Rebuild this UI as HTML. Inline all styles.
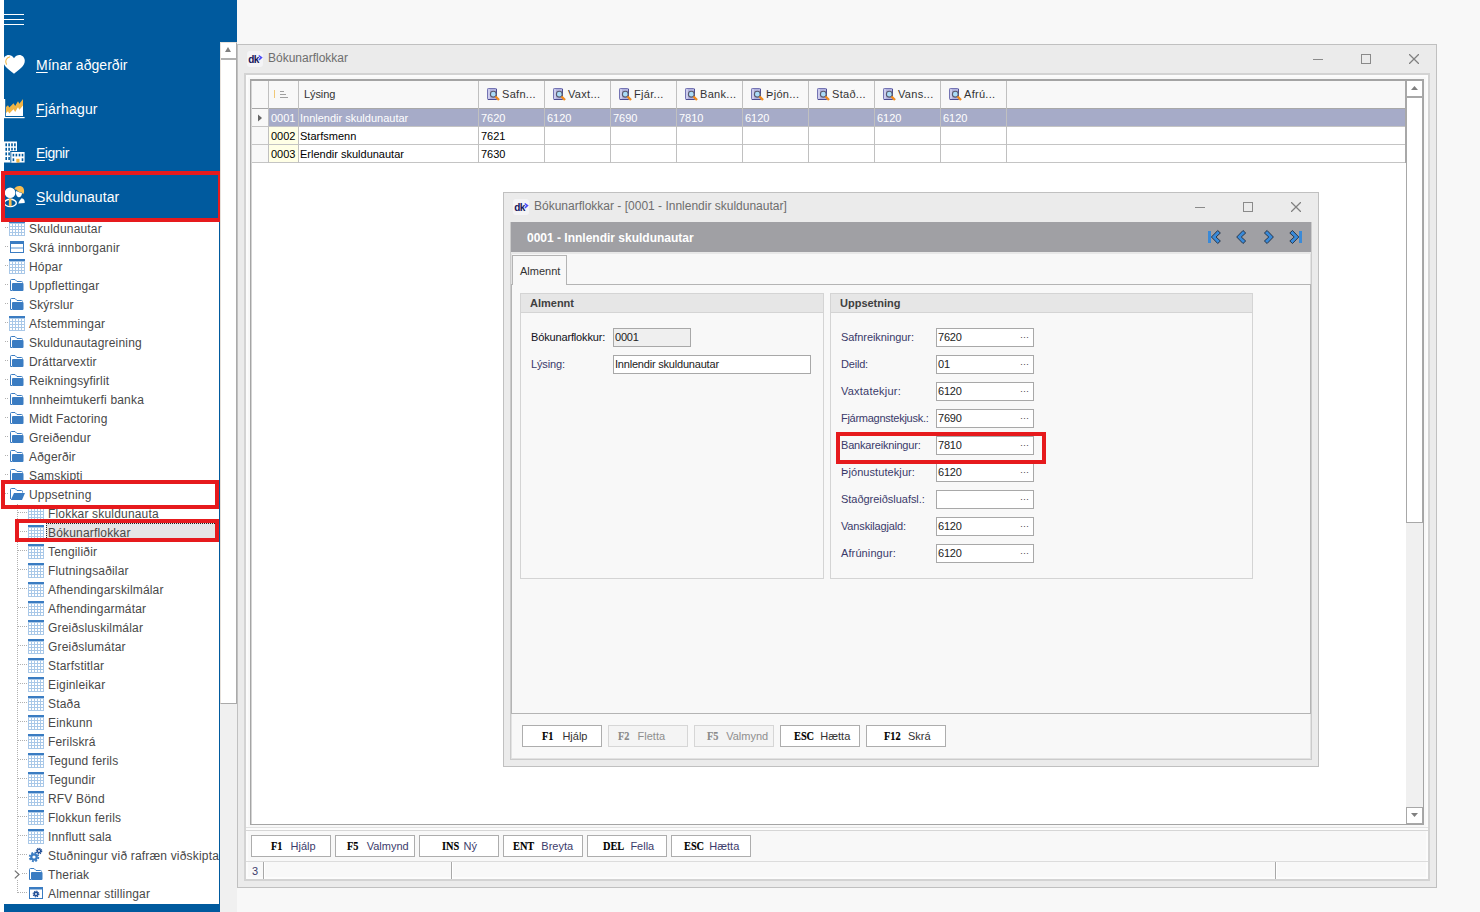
<!DOCTYPE html>
<html lang="is"><head><meta charset="utf-8"><title>Bókunarflokkar</title>
<style>
*{box-sizing:border-box;margin:0;padding:0}
html,body{width:1480px;height:912px;overflow:hidden}
body{position:relative;background:#f8f8f8;font-family:"Liberation Sans",sans-serif;font-size:11px;color:#000}
.a{position:absolute}
.ic{position:absolute;display:block}
.ti{position:absolute;width:16px;height:15px;background:linear-gradient(#3a7cc2,#3a7cc2) 0 0/16px 2px no-repeat,repeating-linear-gradient(90deg,#a9c8e8 0,#a9c8e8 1px,transparent 1px,transparent 3px),repeating-linear-gradient(180deg,#a9c8e8 0,#a9c8e8 1px,transparent 1px,transparent 3px) 0 2px/16px 15px no-repeat,#fff}
.nav{position:absolute;left:36px;color:#fff;font-size:14px;line-height:20px;white-space:nowrap}
.nav u{text-decoration:underline;text-underline-offset:1.5px;text-decoration-thickness:1px}
.tr{position:absolute;font-size:12px;line-height:19px;height:19px;color:#484848;white-space:nowrap;letter-spacing:.18px}
.dot{position:absolute;height:1px;background-image:linear-gradient(90deg,#b0b0b0 1px,transparent 1px);background-size:2px 1px}
.vdot{position:absolute;width:1px;background-image:linear-gradient(180deg,#b0b0b0 1px,transparent 1px);background-size:1px 2px}
.red{position:absolute;border:4px solid #e61a1d}
.t11{position:absolute;font-size:11px;line-height:14px;white-space:nowrap}
.btn{position:absolute;width:80px;height:22px;border:1px solid #adadad;background:#fff;font-size:11px;line-height:20px;white-space:nowrap;color:#3c3c6c}
.btn b,.btn span{position:absolute;top:0}
.btn b{font-family:"Liberation Serif",serif;font-weight:bold;font-size:12px;color:#000;top:-.5px;transform:scaleX(.86);transform-origin:0 50%;-webkit-text-stroke:.15px #000}
.dlg .btn{color:#333}
.btn.dis{background:#f4f4f4;border-color:#d6d6d6;color:#8e8e8e}
.dlg .btn.dis{color:#8e8e8e}
.btn.dis b{color:#8a8a8a;-webkit-text-stroke:.15px #8a8a8a}
.inp{position:absolute;height:19px;border:1px solid #a8a8a8;background:#fff;font-size:11px;line-height:17px;padding-left:1px;white-space:nowrap;color:#222;letter-spacing:-.2px}
.inp i{position:absolute;right:4px;top:0;font-style:normal;color:#444;letter-spacing:0;font-size:9px}
.lbl{position:absolute;font-size:11px;line-height:19px;white-space:nowrap;color:#3a3a6a;letter-spacing:-.15px}
.hc{position:absolute;top:81px;height:27px;font-size:11px;line-height:27px;white-space:nowrap;color:#333;letter-spacing:.3px}
.cell{position:absolute;font-size:11px;line-height:17px;height:17px;white-space:nowrap}
</style></head><body>

<div class="a" style="left:0;top:0;width:236px;height:912px;background:#fff"></div>
<div class="a" style="left:4px;top:0;width:233px;height:42px;background:#005a9e"></div>
<div class="a" style="left:4px;top:42px;width:216px;height:180px;background:#005a9e"></div>
<div class="a" style="left:4px;top:14px;width:20px;height:1px;background:#fff"></div>
<div class="a" style="left:4px;top:19px;width:20px;height:1px;background:#fff"></div>
<div class="a" style="left:4px;top:24px;width:20px;height:1px;background:#fff"></div>
<div class="nav" style="top:55px;letter-spacing:0.03px"><u>M</u>ínar aðgerðir</div>
<div class="nav" style="top:99px;letter-spacing:0.2px"><u>F</u>járhagur</div>
<div class="nav" style="top:143px;letter-spacing:-0.5px"><u>E</u>ignir</div>
<div class="nav" style="top:187px;letter-spacing:0.06px"><u>S</u>kuldunautar</div>
<svg class="ic" style="left:0;top:48px" width="28" height="164" viewBox="0 48 28 164">
<path d="M14 73.8C9 69.5 3.2 66.5 3.2 60.8C3.2 54.6 10.6 52.6 14 58.2C17.4 52.6 24.8 54.6 24.8 60.8C24.8 66.5 19 69.5 14 73.8Z" fill="#fff"/>
<path d="M6.6 64.6C4.6 61.5 6 57.6 10 56.8" fill="none" stroke="#f2b544" stroke-width="1.1"/>
<rect x="4" y="117" width="20.6" height="1.2" fill="#fff"/><rect x="4" y="99" width="1.2" height="18" fill="#fff"/>
<path d="M6 110L23 103V116H6Z" fill="#fff"/>
<path d="M6 107L8 105.2L9.3 107.6L13.5 103.2L15.2 106L18 101.2L19.4 103.8L22.8 99.2L23 99.4V105.4L19.4 109.8L18 107.2L15.2 112L13.5 109.2L9.3 113.6L8 111.2L6 113Z" fill="#f2b544"/>
<rect x="2" y="141.5" width="15" height="21" fill="#fff"/>
<rect x="11.3" y="152" width="13.3" height="10.5" fill="#fff"/>
<rect x="10.4" y="151" width="0.9" height="11.5" fill="#005a9e"/><rect x="10.4" y="151" width="6.8" height="1" fill="#005a9e"/>
<g fill="#005a9e">
<rect x="5.4" y="143.3" width="1.6" height="3"/><rect x="8.3" y="143.3" width="1.6" height="3"/><rect x="11.2" y="143.3" width="1.6" height="3"/><rect x="14.1" y="143.3" width="1.6" height="3"/>
<rect x="5.4" y="147.8" width="1.6" height="3"/><rect x="8.3" y="147.8" width="1.6" height="3"/><rect x="11.2" y="147.8" width="1.6" height="2.6"/><rect x="14.1" y="147.8" width="1.6" height="2.6"/>
<rect x="5.4" y="152.4" width="1.6" height="3"/><rect x="8.3" y="152.4" width="1.6" height="3"/>
<rect x="5.4" y="157" width="1.6" height="3"/><rect x="8.3" y="157" width="1.6" height="3"/>
<rect x="12.6" y="153.8" width="1.6" height="2.6"/><rect x="15.6" y="153.8" width="1.6" height="2.6"/><rect x="18.7" y="153.8" width="1.6" height="2.6"/><rect x="21.7" y="153.8" width="1.6" height="2.6"/>
<rect x="12.6" y="158.3" width="1.6" height="2.8"/><rect x="21.7" y="158.3" width="1.6" height="2.8"/>
</g>
<rect x="16.3" y="158.8" width="3.2" height="3.7" fill="#f2b544"/>
<path d="M14.3 189C15.2 186.8 17.8 185.6 20.2 186C23 186.4 24.6 189 24 192.4L23.2 194.2L21.6 192.4C19.8 192.6 17.6 191.6 16.6 189.8C15.8 189.8 15 189.6 14.3 189Z" fill="#f8bd50"/>
<path d="M16.4 190.6C17.6 192 19.6 192.9 21.4 192.8L22 193.4C21.8 195.6 20.4 197.2 19 197.2C17.4 197.2 16 195.4 15.9 193Z" fill="#fff"/>
<path d="M18.2 203.6L19.6 200.4L21.6 198.2C23.8 198.4 25 200.4 24.7 203Z" fill="#fff"/>
<ellipse cx="10.3" cy="202.9" rx="6" ry="3.7" fill="#005a9e" stroke="#fff" stroke-width="1.4"/>
<circle cx="10.1" cy="192.8" r="5.3" fill="#fff"/>
<path d="M9 198.4H11.4L11.7 205.6L10.2 206.6L8.8 205.6Z" fill="#f8bd50"/>
</svg>
<div class="dot" style="left:5px;top:227px;width:4px"></div>
<div class="ti" style="left:9px;top:221px"></div>
<div class="tr" style="left:29px;top:220px">Skuldunautar</div>
<div class="dot" style="left:5px;top:246px;width:4px"></div>
<svg class="ic" style="left:10px;top:241px" width="14" height="12" viewBox="0 0 14 12"><rect x="0.5" y="0.5" width="13" height="11" fill="#fff" stroke="#3a7cc2"/><rect x="0" y="0" width="14" height="3" fill="#3a7cc2"/><rect x="1" y="6" width="12" height="2" fill="#a9c8e8"/></svg>
<div class="tr" style="left:29px;top:239px">Skrá innborganir</div>
<div class="dot" style="left:5px;top:265px;width:4px"></div>
<div class="ti" style="left:9px;top:259px"></div>
<div class="tr" style="left:29px;top:258px">Hópar</div>
<div class="dot" style="left:5px;top:284px;width:4px"></div>
<svg class="ic" style="left:10px;top:279px" width="14" height="12" viewBox="0 0 14 12"><path d="M0.5 11.5V1.5Q0.5 0.5 1.5 0.5H5L7 2.5H11.5Q12.5 2.5 12.5 3.5" fill="none" stroke="#3a7cc2"/><path d="M0.5 11.5H2" stroke="#3a7cc2"/><rect x="2" y="4" width="11.5" height="8" rx="1" fill="#3a7cc2"/></svg>
<div class="tr" style="left:29px;top:277px">Uppflettingar</div>
<div class="dot" style="left:5px;top:303px;width:4px"></div>
<svg class="ic" style="left:10px;top:298px" width="14" height="12" viewBox="0 0 14 12"><path d="M0.5 11.5V1.5Q0.5 0.5 1.5 0.5H5L7 2.5H11.5Q12.5 2.5 12.5 3.5" fill="none" stroke="#3a7cc2"/><path d="M0.5 11.5H2" stroke="#3a7cc2"/><rect x="2" y="4" width="11.5" height="8" rx="1" fill="#3a7cc2"/></svg>
<div class="tr" style="left:29px;top:296px">Skýrslur</div>
<div class="dot" style="left:5px;top:322px;width:4px"></div>
<div class="ti" style="left:9px;top:316px"></div>
<div class="tr" style="left:29px;top:315px">Afstemmingar</div>
<div class="dot" style="left:5px;top:341px;width:4px"></div>
<svg class="ic" style="left:10px;top:336px" width="14" height="12" viewBox="0 0 14 12"><path d="M0.5 11.5V1.5Q0.5 0.5 1.5 0.5H5L7 2.5H11.5Q12.5 2.5 12.5 3.5" fill="none" stroke="#3a7cc2"/><path d="M0.5 11.5H2" stroke="#3a7cc2"/><rect x="2" y="4" width="11.5" height="8" rx="1" fill="#3a7cc2"/></svg>
<div class="tr" style="left:29px;top:334px">Skuldunautagreining</div>
<div class="dot" style="left:5px;top:360px;width:4px"></div>
<svg class="ic" style="left:10px;top:355px" width="14" height="12" viewBox="0 0 14 12"><path d="M0.5 11.5V1.5Q0.5 0.5 1.5 0.5H5L7 2.5H11.5Q12.5 2.5 12.5 3.5" fill="none" stroke="#3a7cc2"/><path d="M0.5 11.5H2" stroke="#3a7cc2"/><rect x="2" y="4" width="11.5" height="8" rx="1" fill="#3a7cc2"/></svg>
<div class="tr" style="left:29px;top:353px">Dráttarvextir</div>
<div class="dot" style="left:5px;top:379px;width:4px"></div>
<svg class="ic" style="left:10px;top:374px" width="14" height="12" viewBox="0 0 14 12"><path d="M0.5 11.5V1.5Q0.5 0.5 1.5 0.5H5L7 2.5H11.5Q12.5 2.5 12.5 3.5" fill="none" stroke="#3a7cc2"/><path d="M0.5 11.5H2" stroke="#3a7cc2"/><rect x="2" y="4" width="11.5" height="8" rx="1" fill="#3a7cc2"/></svg>
<div class="tr" style="left:29px;top:372px">Reikningsyfirlit</div>
<div class="dot" style="left:5px;top:398px;width:4px"></div>
<svg class="ic" style="left:10px;top:393px" width="14" height="12" viewBox="0 0 14 12"><path d="M0.5 11.5V1.5Q0.5 0.5 1.5 0.5H5L7 2.5H11.5Q12.5 2.5 12.5 3.5" fill="none" stroke="#3a7cc2"/><path d="M0.5 11.5H2" stroke="#3a7cc2"/><rect x="2" y="4" width="11.5" height="8" rx="1" fill="#3a7cc2"/></svg>
<div class="tr" style="left:29px;top:391px">Innheimtukerfi banka</div>
<div class="dot" style="left:5px;top:417px;width:4px"></div>
<svg class="ic" style="left:10px;top:412px" width="14" height="12" viewBox="0 0 14 12"><path d="M0.5 11.5V1.5Q0.5 0.5 1.5 0.5H5L7 2.5H11.5Q12.5 2.5 12.5 3.5" fill="none" stroke="#3a7cc2"/><path d="M0.5 11.5H2" stroke="#3a7cc2"/><rect x="2" y="4" width="11.5" height="8" rx="1" fill="#3a7cc2"/></svg>
<div class="tr" style="left:29px;top:410px">Midt Factoring</div>
<div class="dot" style="left:5px;top:436px;width:4px"></div>
<svg class="ic" style="left:10px;top:431px" width="14" height="12" viewBox="0 0 14 12"><path d="M0.5 11.5V1.5Q0.5 0.5 1.5 0.5H5L7 2.5H11.5Q12.5 2.5 12.5 3.5" fill="none" stroke="#3a7cc2"/><path d="M0.5 11.5H2" stroke="#3a7cc2"/><rect x="2" y="4" width="11.5" height="8" rx="1" fill="#3a7cc2"/></svg>
<div class="tr" style="left:29px;top:429px">Greiðendur</div>
<div class="dot" style="left:5px;top:455px;width:4px"></div>
<svg class="ic" style="left:10px;top:450px" width="14" height="12" viewBox="0 0 14 12"><path d="M0.5 11.5V1.5Q0.5 0.5 1.5 0.5H5L7 2.5H11.5Q12.5 2.5 12.5 3.5" fill="none" stroke="#3a7cc2"/><path d="M0.5 11.5H2" stroke="#3a7cc2"/><rect x="2" y="4" width="11.5" height="8" rx="1" fill="#3a7cc2"/></svg>
<div class="tr" style="left:29px;top:448px">Aðgerðir</div>
<div class="dot" style="left:5px;top:474px;width:4px"></div>
<svg class="ic" style="left:10px;top:469px" width="14" height="12" viewBox="0 0 14 12"><path d="M0.5 11.5V1.5Q0.5 0.5 1.5 0.5H5L7 2.5H11.5Q12.5 2.5 12.5 3.5" fill="none" stroke="#3a7cc2"/><path d="M0.5 11.5H2" stroke="#3a7cc2"/><rect x="2" y="4" width="11.5" height="8" rx="1" fill="#3a7cc2"/></svg>
<div class="tr" style="left:29px;top:467px">Samskipti</div>
<div class="dot" style="left:5px;top:493px;width:4px"></div>
<svg class="ic" style="left:10px;top:488px" width="15" height="12" viewBox="0 0 15 12"><path d="M0.5 11V1.5Q0.5 0.5 1.5 0.5H5L7 2.5H11.5Q12.5 2.5 12.5 3.5V4.5" fill="none" stroke="#3a7cc2"/><path d="M4 5H15L12 12H0.8Z" fill="#3a7cc2"/></svg>
<div class="tr" style="left:29px;top:486px">Uppsetning</div>
<div class="dot" style="left:18px;top:512px;width:9px"></div>
<div class="ti" style="left:28px;top:506px"></div>
<div class="tr" style="left:48px;top:505px">Flokkar skuldunauta</div>
<div class="dot" style="left:18px;top:531px;width:9px"></div>
<div class="a" style="left:46px;top:523px;width:173px;height:19px;background:#e5e5e5;border:1px dotted #222"></div>
<div class="ti" style="left:28px;top:525px"></div>
<div class="tr" style="left:48px;top:524px">Bókunarflokkar</div>
<div class="dot" style="left:18px;top:550px;width:9px"></div>
<div class="ti" style="left:28px;top:544px"></div>
<div class="tr" style="left:48px;top:543px">Tengiliðir</div>
<div class="dot" style="left:18px;top:569px;width:9px"></div>
<div class="ti" style="left:28px;top:563px"></div>
<div class="tr" style="left:48px;top:562px">Flutningsaðilar</div>
<div class="dot" style="left:18px;top:588px;width:9px"></div>
<div class="ti" style="left:28px;top:582px"></div>
<div class="tr" style="left:48px;top:581px">Afhendingarskilmálar</div>
<div class="dot" style="left:18px;top:607px;width:9px"></div>
<div class="ti" style="left:28px;top:601px"></div>
<div class="tr" style="left:48px;top:600px">Afhendingarmátar</div>
<div class="dot" style="left:18px;top:626px;width:9px"></div>
<div class="ti" style="left:28px;top:620px"></div>
<div class="tr" style="left:48px;top:619px">Greiðsluskilmálar</div>
<div class="dot" style="left:18px;top:645px;width:9px"></div>
<div class="ti" style="left:28px;top:639px"></div>
<div class="tr" style="left:48px;top:638px">Greiðslumátar</div>
<div class="dot" style="left:18px;top:664px;width:9px"></div>
<div class="ti" style="left:28px;top:658px"></div>
<div class="tr" style="left:48px;top:657px">Starfstitlar</div>
<div class="dot" style="left:18px;top:683px;width:9px"></div>
<div class="ti" style="left:28px;top:677px"></div>
<div class="tr" style="left:48px;top:676px">Eiginleikar</div>
<div class="dot" style="left:18px;top:702px;width:9px"></div>
<div class="ti" style="left:28px;top:696px"></div>
<div class="tr" style="left:48px;top:695px">Staða</div>
<div class="dot" style="left:18px;top:721px;width:9px"></div>
<div class="ti" style="left:28px;top:715px"></div>
<div class="tr" style="left:48px;top:714px">Einkunn</div>
<div class="dot" style="left:18px;top:740px;width:9px"></div>
<div class="ti" style="left:28px;top:734px"></div>
<div class="tr" style="left:48px;top:733px">Ferilskrá</div>
<div class="dot" style="left:18px;top:759px;width:9px"></div>
<div class="ti" style="left:28px;top:753px"></div>
<div class="tr" style="left:48px;top:752px">Tegund ferils</div>
<div class="dot" style="left:18px;top:778px;width:9px"></div>
<div class="ti" style="left:28px;top:772px"></div>
<div class="tr" style="left:48px;top:771px">Tegundir</div>
<div class="dot" style="left:18px;top:797px;width:9px"></div>
<div class="ti" style="left:28px;top:791px"></div>
<div class="tr" style="left:48px;top:790px">RFV Bönd</div>
<div class="dot" style="left:18px;top:816px;width:9px"></div>
<div class="ti" style="left:28px;top:810px"></div>
<div class="tr" style="left:48px;top:809px">Flokkun ferils</div>
<div class="dot" style="left:18px;top:835px;width:9px"></div>
<div class="ti" style="left:28px;top:829px"></div>
<div class="tr" style="left:48px;top:828px">Innflutt sala</div>
<div class="dot" style="left:18px;top:854px;width:9px"></div>
<svg class="ic" style="left:28px;top:847px" width="16" height="16" viewBox="0 0 16 16"><circle cx="6" cy="10" r="3.8" fill="#3a7cc2"/><circle cx="6" cy="10" r="4.3" fill="none" stroke="#3a7cc2" stroke-width="1.8" stroke-dasharray="1.9 1.48"/><circle cx="6" cy="10" r="1.6" fill="#fff"/><circle cx="11" cy="4" r="2.3" fill="#1f4e96"/><circle cx="11" cy="4" r="2.7" fill="none" stroke="#1f4e96" stroke-width="1.2" stroke-dasharray="1.2 0.92"/><circle cx="11" cy="4" r="0.9" fill="#fff"/></svg>
<div class="tr" style="left:48px;top:847px">Stuðningur við rafræn viðskipta</div>
<div class="dot" style="left:18px;top:873px;width:9px"></div>
<svg class="ic" style="left:29px;top:868px" width="14" height="12" viewBox="0 0 14 12"><path d="M0.5 11.5V1.5Q0.5 0.5 1.5 0.5H5L7 2.5H11.5Q12.5 2.5 12.5 3.5" fill="none" stroke="#3a7cc2"/><path d="M0.5 11.5H2" stroke="#3a7cc2"/><rect x="2" y="4" width="11.5" height="8" rx="1" fill="#3a7cc2"/></svg>
<div class="tr" style="left:48px;top:866px">Theriak</div>
<div class="dot" style="left:18px;top:892px;width:9px"></div>
<svg class="ic" style="left:29px;top:887px" width="14" height="12" viewBox="0 0 14 12"><rect x="0.5" y="0.5" width="13" height="11" fill="#fff" stroke="#3a7cc2"/><rect x="0" y="0" width="14" height="2.5" fill="#3a7cc2"/><circle cx="7" cy="7" r="2.4" fill="#1f4e96"/><circle cx="7" cy="7" r="2.8" fill="none" stroke="#1f4e96" stroke-width="1.2" stroke-dasharray="1.25 0.95"/><circle cx="7" cy="7" r="0.9" fill="#fff"/></svg>
<div class="tr" style="left:48px;top:885px">Almennar stillingar</div>
<div class="vdot" style="left:17px;top:504px;height:390px"></div>
<svg class="ic" style="left:13px;top:869px" width="8" height="11" viewBox="0 0 8 11"><rect width="8" height="11" fill="#fff"/><path d="M1.8 1.6L6 5.5L1.8 9.4" fill="none" stroke="#707070" stroke-width="1.2"/></svg>
<div class="a" style="left:219px;top:222px;width:1px;height:690px;background:#005a9e"></div>
<div class="a" style="left:4px;top:904px;width:216px;height:8px;background:#005a9e"></div>
<div class="red" style="left:1px;top:171px;width:221px;height:51px"></div>
<div class="red" style="left:1px;top:480px;width:218px;height:29px"></div>
<div class="red" style="left:15px;top:519px;width:204px;height:23px"></div>
<div class="a" style="left:220px;top:42px;width:17px;height:870px;background:#f0f0f0"></div>
<div class="a" style="left:220px;top:42px;width:17px;height:662px;background:#fff;border:1px solid #aaa;border-left-color:#e8e2dc;border-top-color:#e8e2dc"></div>
<div class="a" style="left:221px;top:58px;width:15px;height:2px;background:#b0b0b0"></div>
<svg class="ic" style="left:225px;top:47px" width="6" height="5" viewBox="0 0 6 5"><path d="M0 5L3 0L6 5Z" fill="#808080"/></svg>
<div class="a" style="left:237px;top:44px;width:1200px;height:844px;background:#ebebeb;border:1px solid #c0c0c0"></div>
<svg class="ic" style="left:247px;top:51px" width="16" height="16" viewBox="0 0 16 16"><rect x="0" y="0" width="16" height="16" rx="3" fill="#f4f4f6"/><text x="1.2" y="12" font-family="Liberation Sans, sans-serif" font-weight="bold" font-size="10" fill="#14145a" letter-spacing="-0.6">dk</text><path d="M11.7 4.5L14.5 6.6L11.9 8.9" fill="none" stroke="#4a4af8" stroke-width="1.5"/></svg>
<div class="a" style="left:268px;top:50px;font-size:12px;line-height:16px;color:#6e6e6e;white-space:nowrap">Bókunarflokkar</div>
<div class="a" style="left:1313px;top:59px;width:10px;height:1px;background:#8a8a8a"></div><div class="a" style="left:1361px;top:54px;width:10px;height:10px;border:1px solid #8a8a8a"></div><svg class="ic" style="left:1409px;top:54px" width="10" height="10" viewBox="0 0 10 10"><path d="M0 0L10 10M10 0L0 10" stroke="#808080" stroke-width="1.25"/></svg>
<div class="a" style="left:244px;top:73px;width:1186px;height:808px;background:#f8f8f8;border:2px solid #d3d3d3;box-shadow:inset 0 0 0 2px #fcfcfc"></div>
<div class="a" style="left:250px;top:79px;width:1174px;height:746px;background:#fff;border:1px solid #a4a4a4;border-top-width:2px"></div>
<div class="a" style="left:252px;top:81px;width:1153px;height:27px;background:#f8f8f8"></div>
<div class="a" style="left:252px;top:108px;width:1153px;height:1px;background:#a8a8a8"></div>
<div class="a" style="left:252px;top:109px;width:16px;height:53px;background:#f8f8f8"></div>
<div class="a" style="left:269px;top:127px;width:29px;height:35px;background:#ffffe6"></div>
<div class="a" style="left:269px;top:109px;width:1136px;height:17px;background:#a6abc8"></div>
<div class="a" style="left:252px;top:126px;width:1153px;height:1px;background:#c4c4c4"></div>
<div class="a" style="left:252px;top:144px;width:1153px;height:1px;background:#c4c4c4"></div>
<div class="a" style="left:252px;top:162px;width:1153px;height:1px;background:#c4c4c4"></div>
<div class="a" style="left:268px;top:81px;width:1px;height:82px;background:#c0c0c0"></div>
<div class="a" style="left:298px;top:81px;width:1px;height:82px;background:#c0c0c0"></div>
<div class="a" style="left:478px;top:81px;width:1px;height:82px;background:#c0c0c0"></div>
<div class="a" style="left:544px;top:81px;width:1px;height:82px;background:#c0c0c0"></div>
<div class="a" style="left:610px;top:81px;width:1px;height:82px;background:#c0c0c0"></div>
<div class="a" style="left:676px;top:81px;width:1px;height:82px;background:#c0c0c0"></div>
<div class="a" style="left:742px;top:81px;width:1px;height:82px;background:#c0c0c0"></div>
<div class="a" style="left:808px;top:81px;width:1px;height:82px;background:#c0c0c0"></div>
<div class="a" style="left:874px;top:81px;width:1px;height:82px;background:#c0c0c0"></div>
<div class="a" style="left:940px;top:81px;width:1px;height:82px;background:#c0c0c0"></div>
<div class="a" style="left:1006px;top:81px;width:1px;height:82px;background:#c0c0c0"></div>
<svg class="ic" style="left:258px;top:114px" width="4" height="8" viewBox="0 0 4 8"><path d="M0 0.5L4 4L0 7.5Z" fill="#666"/></svg>
<div class="a" style="left:274px;top:90px;width:1px;height:8px;background:#f0c878"></div>
<div class="a" style="left:280px;top:91px;width:4px;height:1px;background:#a0a0a0"></div>
<div class="a" style="left:280px;top:94px;width:6px;height:1px;background:#a0a0a0"></div>
<div class="a" style="left:280px;top:97px;width:8px;height:1px;background:#a0a0a0"></div>
<div class="hc" style="left:304px;letter-spacing:-.1px">Lýsing</div>
<svg class="ic" style="left:487px;top:88px" width="13" height="13" viewBox="0 0 13 13"><rect x="0.5" y="0.5" width="9" height="11" rx="0.8" fill="#b2b2de" stroke="#7474b4"/><path d="M9.5 1V11.5H1" fill="none" stroke="#4c4c90"/><rect x="1.2" y="1.2" width="1.6" height="9.6" fill="#d4d4f0"/><circle cx="6.3" cy="6.2" r="2.9" fill="#aadcf8" stroke="#5a5a6e" stroke-width="1.1"/><path d="M8.5 8.5L12 12" stroke="#f08a1c" stroke-width="2.4"/></svg>
<div class="hc" style="left:502px">Safn...</div>
<svg class="ic" style="left:553px;top:88px" width="13" height="13" viewBox="0 0 13 13"><rect x="0.5" y="0.5" width="9" height="11" rx="0.8" fill="#b2b2de" stroke="#7474b4"/><path d="M9.5 1V11.5H1" fill="none" stroke="#4c4c90"/><rect x="1.2" y="1.2" width="1.6" height="9.6" fill="#d4d4f0"/><circle cx="6.3" cy="6.2" r="2.9" fill="#aadcf8" stroke="#5a5a6e" stroke-width="1.1"/><path d="M8.5 8.5L12 12" stroke="#f08a1c" stroke-width="2.4"/></svg>
<div class="hc" style="left:568px">Vaxt...</div>
<svg class="ic" style="left:619px;top:88px" width="13" height="13" viewBox="0 0 13 13"><rect x="0.5" y="0.5" width="9" height="11" rx="0.8" fill="#b2b2de" stroke="#7474b4"/><path d="M9.5 1V11.5H1" fill="none" stroke="#4c4c90"/><rect x="1.2" y="1.2" width="1.6" height="9.6" fill="#d4d4f0"/><circle cx="6.3" cy="6.2" r="2.9" fill="#aadcf8" stroke="#5a5a6e" stroke-width="1.1"/><path d="M8.5 8.5L12 12" stroke="#f08a1c" stroke-width="2.4"/></svg>
<div class="hc" style="left:634px">Fjár...</div>
<svg class="ic" style="left:685px;top:88px" width="13" height="13" viewBox="0 0 13 13"><rect x="0.5" y="0.5" width="9" height="11" rx="0.8" fill="#b2b2de" stroke="#7474b4"/><path d="M9.5 1V11.5H1" fill="none" stroke="#4c4c90"/><rect x="1.2" y="1.2" width="1.6" height="9.6" fill="#d4d4f0"/><circle cx="6.3" cy="6.2" r="2.9" fill="#aadcf8" stroke="#5a5a6e" stroke-width="1.1"/><path d="M8.5 8.5L12 12" stroke="#f08a1c" stroke-width="2.4"/></svg>
<div class="hc" style="left:700px">Bank...</div>
<svg class="ic" style="left:751px;top:88px" width="13" height="13" viewBox="0 0 13 13"><rect x="0.5" y="0.5" width="9" height="11" rx="0.8" fill="#b2b2de" stroke="#7474b4"/><path d="M9.5 1V11.5H1" fill="none" stroke="#4c4c90"/><rect x="1.2" y="1.2" width="1.6" height="9.6" fill="#d4d4f0"/><circle cx="6.3" cy="6.2" r="2.9" fill="#aadcf8" stroke="#5a5a6e" stroke-width="1.1"/><path d="M8.5 8.5L12 12" stroke="#f08a1c" stroke-width="2.4"/></svg>
<div class="hc" style="left:766px">Þjón...</div>
<svg class="ic" style="left:817px;top:88px" width="13" height="13" viewBox="0 0 13 13"><rect x="0.5" y="0.5" width="9" height="11" rx="0.8" fill="#b2b2de" stroke="#7474b4"/><path d="M9.5 1V11.5H1" fill="none" stroke="#4c4c90"/><rect x="1.2" y="1.2" width="1.6" height="9.6" fill="#d4d4f0"/><circle cx="6.3" cy="6.2" r="2.9" fill="#aadcf8" stroke="#5a5a6e" stroke-width="1.1"/><path d="M8.5 8.5L12 12" stroke="#f08a1c" stroke-width="2.4"/></svg>
<div class="hc" style="left:832px">Stað...</div>
<svg class="ic" style="left:883px;top:88px" width="13" height="13" viewBox="0 0 13 13"><rect x="0.5" y="0.5" width="9" height="11" rx="0.8" fill="#b2b2de" stroke="#7474b4"/><path d="M9.5 1V11.5H1" fill="none" stroke="#4c4c90"/><rect x="1.2" y="1.2" width="1.6" height="9.6" fill="#d4d4f0"/><circle cx="6.3" cy="6.2" r="2.9" fill="#aadcf8" stroke="#5a5a6e" stroke-width="1.1"/><path d="M8.5 8.5L12 12" stroke="#f08a1c" stroke-width="2.4"/></svg>
<div class="hc" style="left:898px">Vans...</div>
<svg class="ic" style="left:949px;top:88px" width="13" height="13" viewBox="0 0 13 13"><rect x="0.5" y="0.5" width="9" height="11" rx="0.8" fill="#b2b2de" stroke="#7474b4"/><path d="M9.5 1V11.5H1" fill="none" stroke="#4c4c90"/><rect x="1.2" y="1.2" width="1.6" height="9.6" fill="#d4d4f0"/><circle cx="6.3" cy="6.2" r="2.9" fill="#aadcf8" stroke="#5a5a6e" stroke-width="1.1"/><path d="M8.5 8.5L12 12" stroke="#f08a1c" stroke-width="2.4"/></svg>
<div class="hc" style="left:964px">Afrú...</div>
<div class="cell" style="left:271px;top:110px;color:#fff">0001</div>
<div class="cell" style="left:300px;top:110px;color:#fff">Innlendir skuldunautar</div>
<div class="cell" style="left:481px;top:110px;color:#fff">7620</div>
<div class="cell" style="left:547px;top:110px;color:#fff">6120</div>
<div class="cell" style="left:613px;top:110px;color:#fff">7690</div>
<div class="cell" style="left:679px;top:110px;color:#fff">7810</div>
<div class="cell" style="left:745px;top:110px;color:#fff">6120</div>
<div class="cell" style="left:877px;top:110px;color:#fff">6120</div>
<div class="cell" style="left:943px;top:110px;color:#fff">6120</div>
<div class="cell" style="left:271px;top:128px;color:#000">0002</div>
<div class="cell" style="left:300px;top:128px;color:#000">Starfsmenn</div>
<div class="cell" style="left:481px;top:128px;color:#000">7621</div>
<div class="cell" style="left:271px;top:146px;color:#000">0003</div>
<div class="cell" style="left:300px;top:146px;color:#000">Erlendir skuldunautar</div>
<div class="cell" style="left:481px;top:146px;color:#000">7630</div>
<div class="a" style="left:1405px;top:81px;width:1px;height:82px;background:#a8a8a8"></div>
<div class="a" style="left:1406px;top:81px;width:17px;height:743px;background:#f0f0f0"></div>
<div class="a" style="left:251px;top:81px;width:1px;height:743px;background:#d4d4d4"></div>
<div class="a" style="left:1406px;top:81px;width:17px;height:442px;background:#fff;border:1px solid #a8a8a8;border-top:0"></div>
<div class="a" style="left:1407px;top:96px;width:15px;height:2px;background:#a8a8a8"></div>
<svg class="ic" style="left:1411px;top:86px" width="7" height="4" viewBox="0 0 7 4"><path d="M0 4L3.5 0L7 4Z" fill="#808080"/></svg>
<div class="a" style="left:1406px;top:807px;width:17px;height:17px;background:#fff;border:1px solid #a8a8a8"></div>
<svg class="ic" style="left:1411px;top:813px" width="7" height="4" viewBox="0 0 7 4"><path d="M0 0L3.5 4L7 0Z" fill="#808080"/></svg>
<div class="a" style="left:246px;top:827px;width:1182px;height:1px;background:#e2e2e2"></div>
<div class="a" style="left:246px;top:828px;width:1182px;height:2px;background:#fcfcfc"></div>
<div class="a" style="left:246px;top:830px;width:1182px;height:1px;background:#d6d6d6"></div>
<div class="btn" style="left:251px;top:835px"><b style="left:19.0px">F1</b><span style="left:38.5px">Hjálp</span></div>
<div class="btn" style="left:335px;top:835px"><b style="left:11.3px">F5</b><span style="left:30.7px">Valmynd</span></div>
<div class="btn" style="left:419px;top:835px"><b style="left:21.8px">INS</b><span style="left:43.5px">Ný</span></div>
<div class="btn" style="left:503px;top:835px"><b style="left:9.0px">ENT</b><span style="left:37.3px">Breyta</span></div>
<div class="btn" style="left:587px;top:835px"><b style="left:15.0px">DEL</b><span style="left:42.4px">Fella</span></div>
<div class="btn" style="left:671px;top:835px"><b style="left:11.8px">ESC</b><span style="left:37.3px">Hætta</span></div>
<div class="a" style="left:246px;top:861px;width:1182px;height:1px;background:#dcdcdc"></div>
<div class="t11" style="left:252px;top:864px;color:#3c3c6c">3</div>
<div class="a" style="left:263px;top:862px;width:1px;height:17px;background:#a8a8a8"></div>
<div class="a" style="left:264px;top:862px;width:1px;height:17px;background:#fff"></div>
<div class="a" style="left:451px;top:862px;width:1px;height:17px;background:#a8a8a8"></div>
<div class="a" style="left:452px;top:862px;width:1px;height:17px;background:#fff"></div>
<div class="a" style="left:1275px;top:862px;width:1px;height:17px;background:#a8a8a8"></div>
<div class="a" style="left:1276px;top:862px;width:1px;height:17px;background:#fff"></div>
<div class="dlg">
<div class="a" style="left:503px;top:192px;width:816px;height:575px;background:#ebebeb;border:1px solid #c0c0c0"></div>
<svg class="ic" style="left:513px;top:199px" width="16" height="16" viewBox="0 0 16 16"><rect x="0" y="0" width="16" height="16" rx="3" fill="#f4f4f6"/><text x="1.2" y="12" font-family="Liberation Sans, sans-serif" font-weight="bold" font-size="10" fill="#14145a" letter-spacing="-0.6">dk</text><path d="M11.7 4.5L14.5 6.6L11.9 8.9" fill="none" stroke="#4a4af8" stroke-width="1.5"/></svg>
<div class="a" style="left:534px;top:198px;font-size:12px;line-height:16px;color:#6e6e6e;white-space:nowrap">Bókunarflokkar - [0001 - Innlendir skuldunautar]</div>
<div class="a" style="left:1195px;top:207px;width:10px;height:1px;background:#8a8a8a"></div><div class="a" style="left:1243px;top:202px;width:10px;height:10px;border:1px solid #8a8a8a"></div><svg class="ic" style="left:1291px;top:202px" width="10" height="10" viewBox="0 0 10 10"><path d="M0 0L10 10M10 0L0 10" stroke="#808080" stroke-width="1.25"/></svg>
<div class="a" style="left:510px;top:222px;width:802px;height:538px;background:#f8f8f8;border:1px solid #cbcbcb;border-top:0;box-shadow:inset 0 0 0 1px #e2e2e2"></div>
<div class="a" style="left:511px;top:222px;width:800px;height:30px;background:#a0a0a4"></div>
<div class="a" style="left:511px;top:252px;width:800px;height:2px;background:#e8e8e8"></div>
<div class="a" style="left:527px;top:230px;font-size:12px;font-weight:bold;line-height:16px;color:#fff;white-space:nowrap">0001 - Innlendir skuldunautar</div>
<svg class="ic" style="left:1206px;top:229px" width="100" height="16" viewBox="0 0 100 16">
<g fill="#3a8ad8" stroke="#16202e" stroke-width="0.8" stroke-linejoin="round">
<path d="M11.7 1.5L14.4 4L10.0 8L14.4 12L11.7 14.5L5.4 8Z"/>
<path d="M37.0 1.5L39.7 4L35.3 8L39.7 12L37.0 14.5L30.7 8Z"/>
<path d="M61.1 1.5L58.4 4L62.8 8L58.4 12L61.1 14.5L67.4 8Z"/>
<path d="M86.5 1.5L83.8 4L88.2 8L83.8 12L86.5 14.5L92.8 8Z"/>
</g>
<rect x="2" y="2" width="3" height="12" fill="#3a8ad8"/><rect x="93" y="2" width="3" height="12" fill="#3a8ad8"/>
</svg>
<div class="a" style="left:511px;top:284px;width:800px;height:430px;background:#f8f8f8;border:1px solid #b4b4b4"></div>
<div class="a" style="left:512px;top:255px;width:55px;height:30px;background:#f8f8f8;border:1px solid #b4b4b4;border-bottom:0"></div>
<div class="t11" style="left:520px;top:264px;color:#333">Almennt</div>
<div class="a" style="left:520px;top:293px;width:304px;height:286px;border:1px solid #d4d4d4;background:#f8f8f8"></div><div class="a" style="left:520px;top:293px;width:304px;height:20px;border:1px solid #d4d4d4;background:#e6e6e6"></div><div class="t11" style="left:530px;top:296px;font-weight:bold;color:#404040">Almennt</div>
<div class="a" style="left:830px;top:293px;width:423px;height:286px;border:1px solid #d4d4d4;background:#f8f8f8"></div><div class="a" style="left:830px;top:293px;width:423px;height:20px;border:1px solid #d4d4d4;background:#e6e6e6"></div><div class="t11" style="left:840px;top:296px;font-weight:bold;color:#404040">Uppsetning</div>
<div class="lbl" style="left:531px;top:328px;color:#101020">Bókunarflokkur:</div>
<div class="inp" style="left:613px;top:328px;width:78px;background:#efefef">0001</div>
<div class="lbl" style="left:531px;top:355px">Lýsing:</div>
<div class="inp" style="left:613px;top:355px;width:198px">Innlendir skuldunautar</div>
<div class="lbl" style="left:841px;top:328px;letter-spacing:-0.07px">Safnreikningur:</div>
<div class="inp" style="left:936px;top:328px;width:98px">7620<i>···</i></div>
<div class="lbl" style="left:841px;top:355px;letter-spacing:-0.2px">Deild:</div>
<div class="inp" style="left:936px;top:355px;width:98px">01<i>···</i></div>
<div class="lbl" style="left:841px;top:382px;letter-spacing:0.22px">Vaxtatekjur:</div>
<div class="inp" style="left:936px;top:382px;width:98px">6120<i>···</i></div>
<div class="lbl" style="left:841px;top:409px;letter-spacing:-0.27px">Fjármagnstekjusk.:</div>
<div class="inp" style="left:936px;top:409px;width:98px">7690<i>···</i></div>
<div class="lbl" style="left:841px;top:436px;letter-spacing:-0.19px">Bankareikningur:</div>
<div class="inp" style="left:936px;top:436px;width:98px">7810<i>···</i></div>
<div class="lbl" style="left:841px;top:463px;letter-spacing:0.08px">Þjónustutekjur:</div>
<div class="inp" style="left:936px;top:463px;width:98px">6120<i>···</i></div>
<div class="lbl" style="left:841px;top:490px;letter-spacing:-0.03px">Staðgreiðsluafsl.:</div>
<div class="inp" style="left:936px;top:490px;width:98px"><i>···</i></div>
<div class="lbl" style="left:841px;top:517px;letter-spacing:-0.15px">Vanskilagjald:</div>
<div class="inp" style="left:936px;top:517px;width:98px">6120<i>···</i></div>
<div class="lbl" style="left:841px;top:544px;letter-spacing:0.11px">Afrúningur:</div>
<div class="inp" style="left:936px;top:544px;width:98px">6120<i>···</i></div>
<div class="red" style="left:836px;top:432px;width:210px;height:32px"></div>
<div class="btn" style="left:522px;top:725px"><b style="left:18.7px">F1</b><span style="left:39.4px">Hjálp</span></div>
<div class="btn dis" style="left:608px;top:725px"><b style="left:8.6px">F2</b><span style="left:28.6px">Fletta</span></div>
<div class="btn dis" style="left:694px;top:725px"><b style="left:11.5px">F5</b><span style="left:31.2px">Valmynd</span></div>
<div class="btn" style="left:780px;top:725px"><b style="left:13.0px">ESC</b><span style="left:39.3px">Hætta</span></div>
<div class="btn" style="left:866px;top:725px"><b style="left:17.0px">F12</b><span style="left:40.9px">Skrá</span></div>
</div>
</body></html>
